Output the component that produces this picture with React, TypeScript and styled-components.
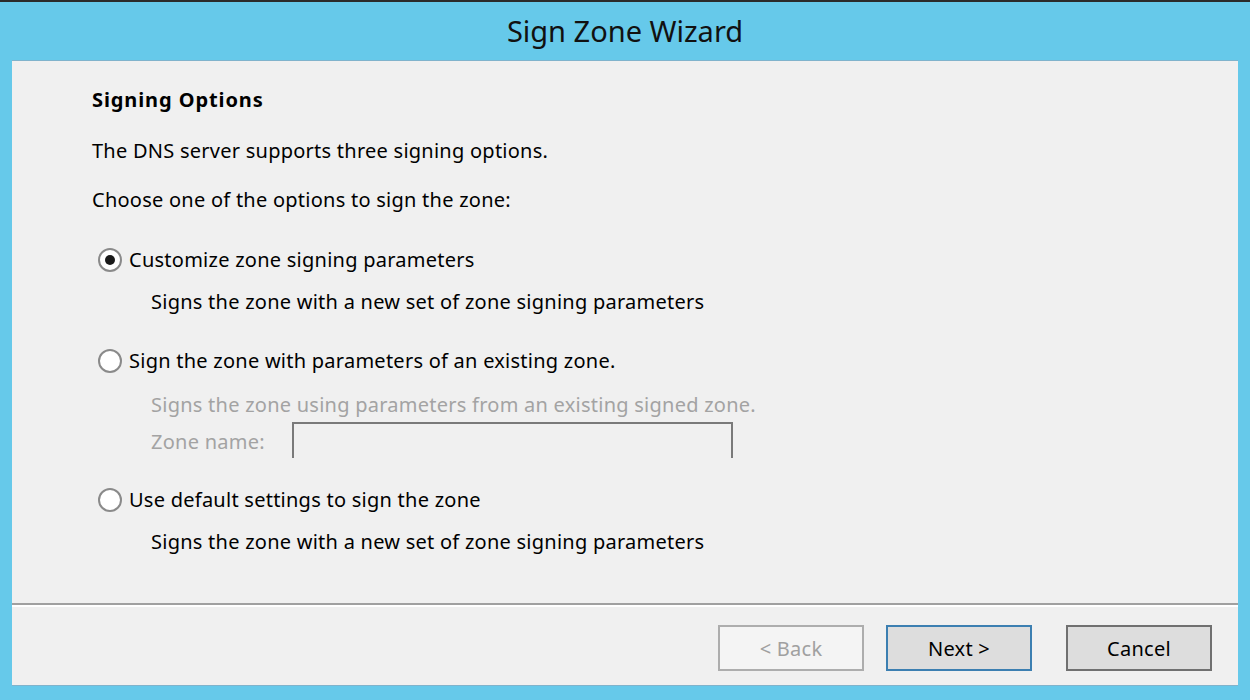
import styled, { createGlobalStyle } from "styled-components";

const GlobalStyle = createGlobalStyle`
  html, body {
    margin: 0;
    padding: 0;
    width: 1250px;
    height: 700px;
    overflow: hidden;
    font-family: "Noto Sans", "Open Sans", Arial, sans-serif;
  }
`;

const Window = styled.div`
  display: flex;
  flex-direction: column;
  width: 1250px;
  height: 700px;
  box-sizing: border-box;
  background: #66c9ea;
  border-top: 2px solid #2b2b2b;
`;

const TitleBar = styled.div`
  height: 58px;
  display: flex;
  align-items: center;
  justify-content: center;
  font-size: 29px;
  color: #111;
  padding-bottom: 2px;
  box-sizing: border-box;
`;

const Panel = styled.div`
  flex: 1;
  margin: 0 12px 14px 12px;
  display: flex;
  flex-direction: column;
  background: #f0f0f0;
  border-top: 1px solid #80b3cc;
  border-bottom: 1px solid #80b3cc;
`;

const Content = styled.div`
  flex: 1;
  padding: 27px 0 0 80px;
  display: flex;
  flex-direction: column;
  font-size: 20px;
  letter-spacing: 0.25px;
  line-height: 24px;
  color: #000;
`;

const Heading = styled.div`
  font-weight: bold;
  letter-spacing: 0.9px;
  height: 24px;
`;

const Line = styled.div<{ $top: number; $indent?: number; $muted?: boolean }>`
  margin-top: ${(p) => p.$top}px;
  padding-left: ${(p) => p.$indent ?? 0}px;
  height: 24px;
  color: ${(p) => (p.$muted ? "#a3a3a3" : "#000")};
  white-space: nowrap;
`;

const RadioRow = styled.label<{ $top: number }>`
  margin-top: ${(p) => p.$top}px;
  display: flex;
  align-items: center;
  gap: 7px;
  height: 24px;
  margin-left: 6px;
`;

const RadioCircle = styled.span<{ $checked?: boolean }>`
  width: 20px;
  height: 20px;
  border-radius: 50%;
  border: 2px solid #8a8a8a;
  background: #fff;
  display: flex;
  align-items: center;
  justify-content: center;
  flex-shrink: 0;

  &::after {
    content: "";
    display: ${(p) => (p.$checked ? "block" : "none")};
    width: 10px;
    height: 10px;
    border-radius: 50%;
    background: #1a1a1a;
  }
`;

const ZoneRow = styled.div`
  margin-top: 5px;
  padding-left: 59px;
  display: flex;
  align-items: center;
  height: 36px;
  color: #a3a3a3;
`;

const ZoneLabel = styled.span`
  width: 141px;
  flex-shrink: 0;
  padding-top: 3px;
`;

const ZoneInput = styled.div`
  width: 437px;
  height: 34px;
  border: 2px solid #7a7a7a;
  border-bottom: none;
  align-self: flex-start;
`;

const Separator = styled.div`
  height: 2px;
  background: #a0a0a0;
  border-bottom: 2px solid #ffffff;
`;

const Footer = styled.div`
  height: 78px;
  box-sizing: border-box;
  padding: 18px 26px 0 0;
  display: flex;
  justify-content: flex-end;
  align-items: flex-start;
  gap: 22px;
`;

const Button = styled.button<{ $variant?: "default" | "disabled" }>`
  width: 146px;
  height: 46px;
  box-sizing: border-box;
  font-family: inherit;
  font-size: 20px;
  letter-spacing: 0.25px;
  background: ${(p) => (p.$variant === "disabled" ? "#f4f4f4" : "#dddddd")};
  color: ${(p) => (p.$variant === "disabled" ? "#a0a0a0" : "#000")};
  border: 2px solid
    ${(p) =>
      p.$variant === "disabled"
        ? "#adadad"
        : p.$variant === "default"
        ? "#3c7fb1"
        : "#707070"};
  padding: 0;
  cursor: default;
`;

const CancelButton = styled(Button)`
  margin-left: 12px;
`;

function Radio({ checked, children, top }: { checked?: boolean; children: string; top: number }) {
  return (
    <RadioRow $top={top}>
      <RadioCircle $checked={checked} />
      <span>{children}</span>
    </RadioRow>
  );
}

export default function App() {
  return (
    <>
      <GlobalStyle />
      <Window>
        <TitleBar>Sign Zone Wizard</TitleBar>
        <Panel>
          <Content>
            <Heading>Signing Options</Heading>
            <Line $top={27}>The DNS server supports three signing options.</Line>
            <Line $top={25}>Choose one of the options to sign the zone:</Line>
            <Radio checked top={36}>
              Customize zone signing parameters
            </Radio>
            <Line $top={18} $indent={59}>
              Signs the zone with a new set of zone signing parameters
            </Line>
            <Radio top={35}>Sign the zone with parameters of an existing zone.</Radio>
            <Line $top={20} $indent={59} $muted>
              Signs the zone using parameters from an existing signed zone.
            </Line>
            <ZoneRow>
              <ZoneLabel>Zone name:</ZoneLabel>
              <ZoneInput />
            </ZoneRow>
            <Radio top={30}>Use default settings to sign the zone</Radio>
            <Line $top={18} $indent={59}>
              Signs the zone with a new set of zone signing parameters
            </Line>
          </Content>
          <Separator />
          <Footer>
            <Button $variant="disabled">&lt; Back</Button>
            <Button $variant="default">Next &gt;</Button>
            <CancelButton>Cancel</CancelButton>
          </Footer>
        </Panel>
      </Window>
    </>
  );
}
